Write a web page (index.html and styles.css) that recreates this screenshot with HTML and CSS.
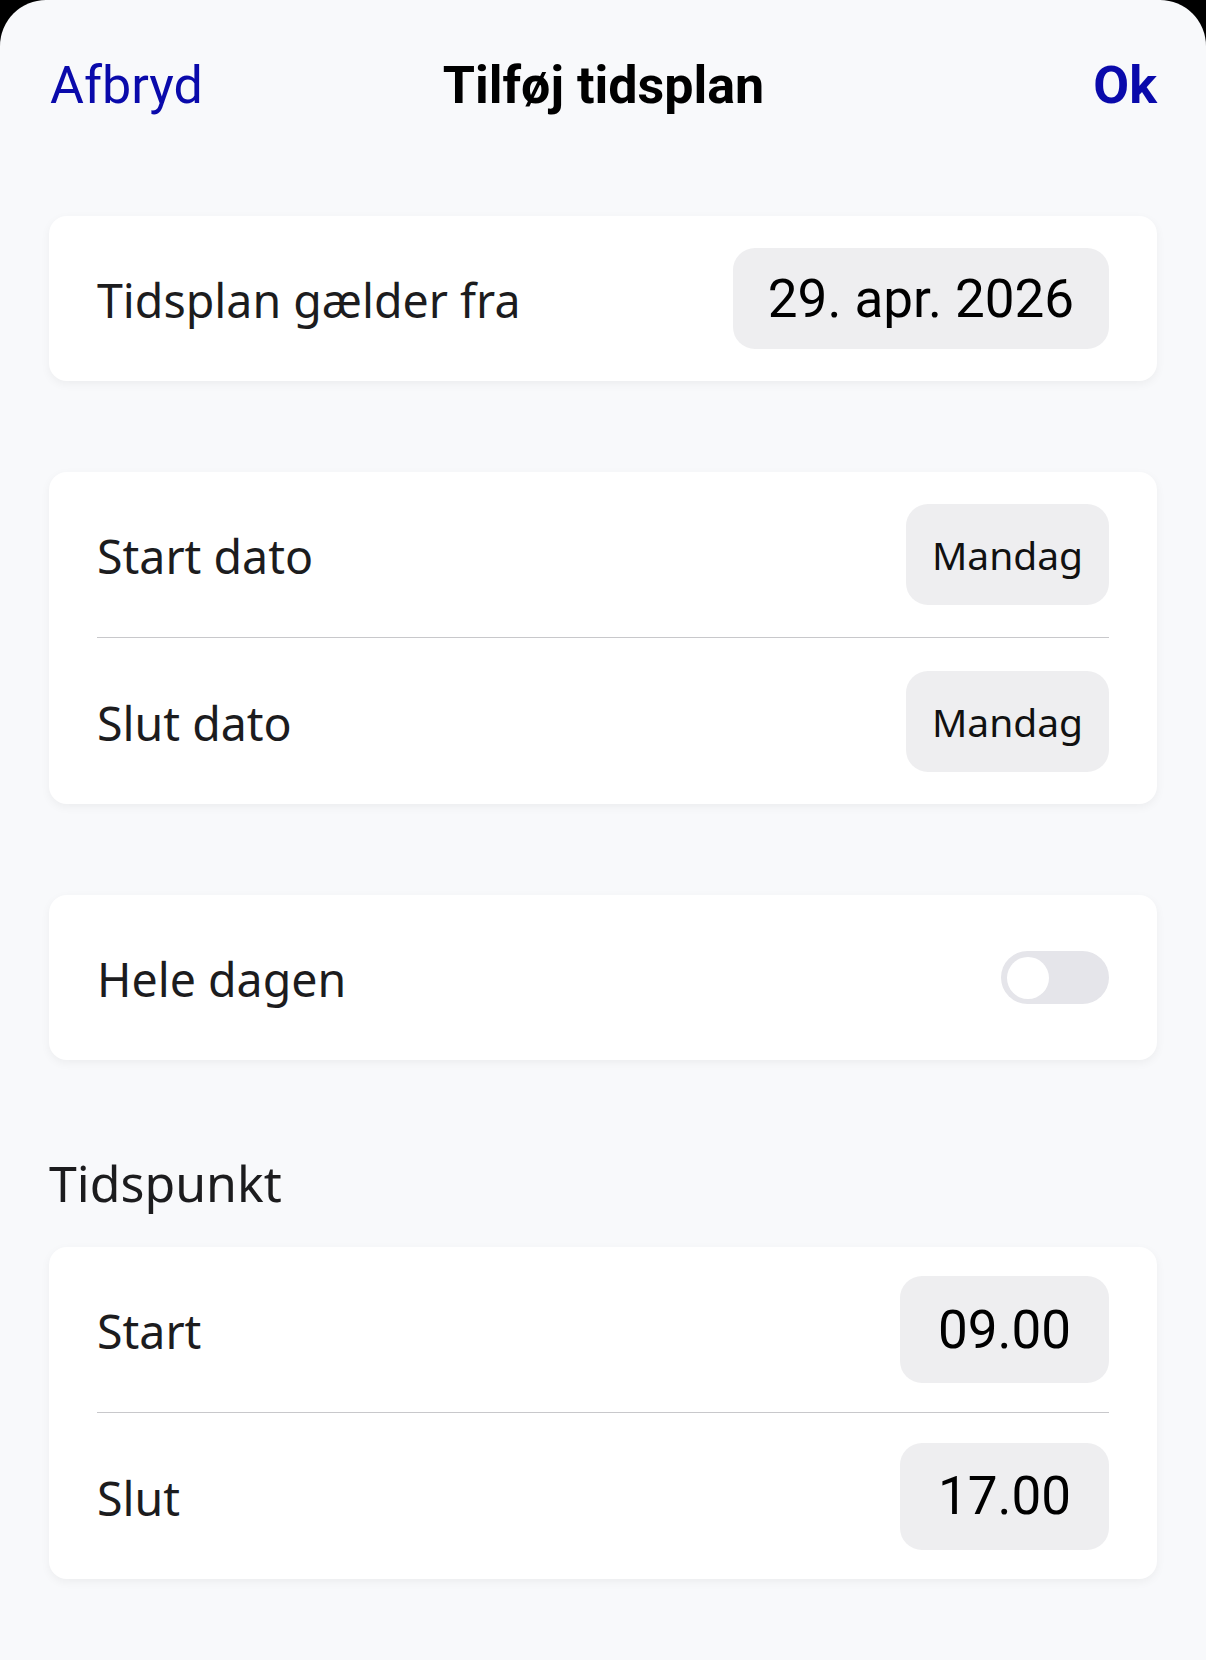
FILE: index.html
```html
<!DOCTYPE html>
<html lang="da">
<head>
<meta charset="utf-8">
<title>Tilføj tidsplan</title>
<link rel="stylesheet" href="styles.css">
</head>
<body>
<div class="sheet">
  <header class="nav">
    <span class="nav-btn">Afbryd</span>
    <span class="nav-title">Tilføj tidsplan</span>
    <span class="nav-btn nav-ok">Ok</span>
  </header>
  <main class="content">
    <section class="card card-first">
      <div class="row">
        <span class="label">Tidsplan gælder fra</span>
        <span class="pill pill-date">29. apr. 2026</span>
      </div>
    </section>

    <section class="card">
      <div class="row">
        <span class="label">Start dato</span>
        <span class="pill pill-day">Mandag</span>
      </div>
      <div class="divider"></div>
      <div class="row">
        <span class="label">Slut dato</span>
        <span class="pill pill-day">Mandag</span>
      </div>
    </section>

    <section class="card">
      <div class="row">
        <span class="label">Hele dagen</span>
        <span class="toggle"><span class="knob"></span></span>
      </div>
    </section>

    <h2 class="section-title">Tidspunkt</h2>
    <section class="card card-time">
      <div class="row">
        <span class="label">Start</span>
        <span class="pill pill-time">09.00</span>
      </div>
      <div class="divider"></div>
      <div class="row">
        <span class="label">Slut</span>
        <span class="pill pill-time">17.00</span>
      </div>
    </section>
  </main>
</div>
</body>
</html>
```
FILE: styles.css
```css
html, body {
  margin: 0;
  padding: 0;
  background: #000;
}

.sheet {
  min-height: 1660px;
  background: #f8f9fb;
  border-radius: 46px 46px 0 0;
  overflow: hidden;
}

.nav {
  height: 170px;
  display: grid;
  grid-template-columns: 1fr auto 1fr;
  align-items: center;
  padding: 0 49px 0 50px;
  font-family: Roboto, "Liberation Sans", sans-serif;
  font-size: 52px;
  line-height: 61px;
}

.nav-btn {
  color: #0a0aab;
}

.nav-ok {
  font-weight: 700;
  justify-self: end;
}

.nav-title {
  font-weight: 700;
  color: #000;
  text-align: center;
}

.content {
  padding: 0 49px;
  display: flex;
  flex-direction: column;
}

.card {
  background: #fff;
  border-radius: 18px;
  box-shadow: 0 3px 10px rgba(0, 0, 0, 0.05);
  padding: 0 48px;
  margin-top: 91px;
}

.card-first {
  margin-top: 46px;
}

.row {
  display: flex;
  align-items: center;
  justify-content: space-between;
  height: 165px;
}

.card .row + .divider + .row {
  height: 166px;
}

.divider {
  height: 1px;
  background: #c8c8cb;
}

.label {
  font-family: "Noto Sans", "Open Sans", sans-serif;
  font-size: 46.5px;
  color: #1c1c1e;
  line-height: 64px;
  padding-top: 3px;
}

.pill {
  display: flex;
  align-items: center;
  justify-content: center;
  background: #eeeef0;
  border-radius: 22px;
  color: #000;
}

.pill-date {
  height: 101px;
  width: 376px;
  font-family: Roboto, "Liberation Sans", sans-serif;
  font-size: 53px;
}

.pill-day {
  height: 101px;
  width: 203px;
  font-family: "Noto Sans", "Open Sans", sans-serif;
  font-size: 39px;
  color: #111;
}

.pill-time {
  height: 107px;
  width: 209px;
  font-family: Roboto, "Liberation Sans", sans-serif;
  font-size: 53px;
}

.toggle {
  width: 108px;
  height: 53px;
  border-radius: 27px;
  background: #e5e5ea;
  display: flex;
  align-items: center;
  padding: 0 6px;
  box-sizing: border-box;
}

.knob {
  width: 42px;
  height: 42px;
  border-radius: 50%;
  background: #fff;
}

.section-title {
  margin: 89px 0 0 0;
  font-family: "Noto Sans", "Open Sans", sans-serif;
  font-size: 50px;
  font-weight: 400;
  line-height: 68px;
  color: #1c1c1e;
}

.card-time {
  margin-top: 30px;
}
```
